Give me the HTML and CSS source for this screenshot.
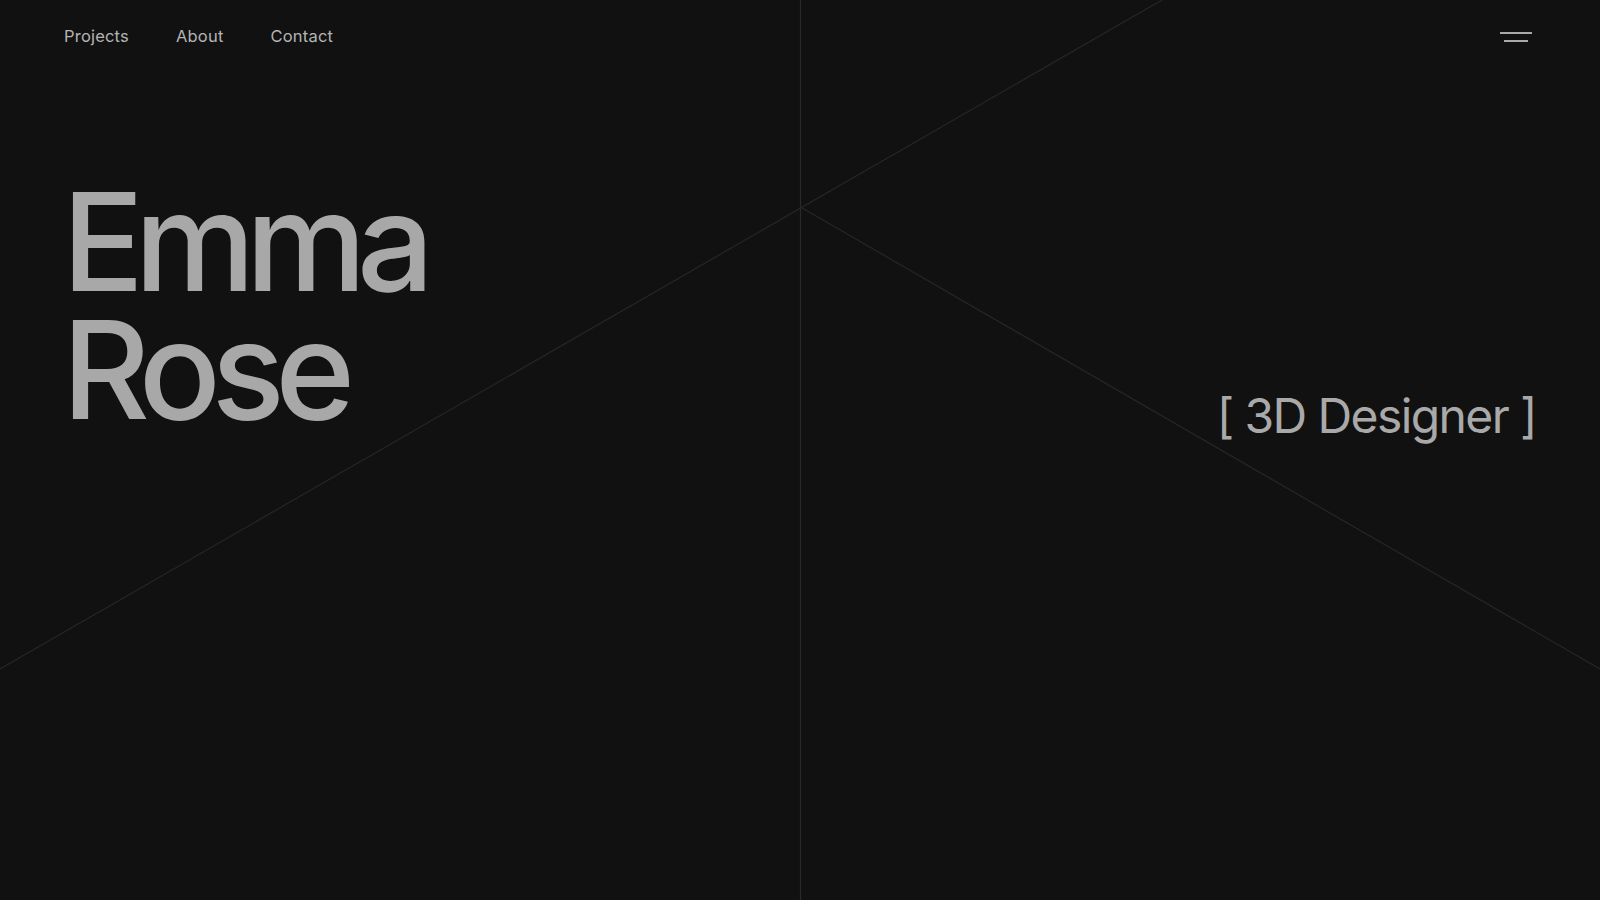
FILE: index.html
```html
<!DOCTYPE html>
<html lang="en">
<head>
<meta charset="utf-8">
<title>Emma Rose — 3D Designer</title>
<link rel="stylesheet" href="styles.css">
</head>
<body>
<svg class="grid" width="1600" height="900" viewBox="0 0 1600 900" aria-hidden="true">
  <line x1="800.5" y1="0" x2="800.5" y2="900" class="ln ln-v"/>
  <line x1="0" y1="669" x2="1162" y2="0" class="ln"/>
  <line x1="800.5" y1="207" x2="1600" y2="669" class="ln"/>
</svg>
<div class="page">
  <header class="top">
    <nav class="nav">
      <a href="#">Projects</a>
      <a href="#">About</a>
      <a href="#">Contact</a>
    </nav>
    <button class="menu" aria-label="Menu">
      <span class="bar bar-long"></span>
      <span class="bar bar-short"></span>
    </button>
  </header>
  <main class="hero">
    <h1 class="name">Emma<br>Rose</h1>
    <p class="role">[ 3D Designer ]</p>
  </main>
</div>
</body>
</html>
```

FILE: styles.css
```css
html, body {
  margin: 0;
  padding: 0;
  background: #111111;
  height: 100%;
  overflow: hidden;
}
body {
  font-family: Inter, "Noto Sans", "Liberation Sans", sans-serif;
  color: #a9a9a9;
  position: relative;
}
.grid {
  position: absolute;
  left: 0;
  top: 0;
  z-index: 0;
}
.ln {
  stroke: #262626;
  stroke-width: 1.2;
}
.ln-v {
  stroke: #2a2a2a;
}
.page {
  position: relative;
  z-index: 1;
  padding: 0 64px;
}
.top {
  height: 72px;
  display: flex;
  align-items: center;
  justify-content: space-between;
}
.nav {
  display: flex;
  gap: 47px;
}
.nav a {
  color: #b4b4b4;
  text-decoration: none;
  font-size: 16.5px;
  letter-spacing: 0.2px;
}
.menu {
  background: none;
  border: 0;
  padding: 0;
  width: 32px;
  height: 10px;
  display: flex;
  flex-direction: column;
  align-items: center;
  justify-content: space-between;
  margin-top: 1px;
  margin-right: 4px;
}
.bar {
  display: block;
  height: 2px;
  background: #a9a9a9;
}
.bar-long { width: 32px; }
.bar-short { width: 24px; }
.hero {
  display: flex;
  justify-content: space-between;
  align-items: flex-end;
  margin-top: 106px;
}
.name {
  margin: 0;
  font-size: 136px;
  line-height: 128px;
  font-weight: 500;
  letter-spacing: -9.5px;
  color: #a8a8a8;
  margin-left: -2px;
}
.role {
  margin: 0 0 -6px 0;
  font-size: 48px;
  line-height: 1;
  font-weight: 400;
  letter-spacing: -1.6px;
  color: #a9a9a9;
}
```
